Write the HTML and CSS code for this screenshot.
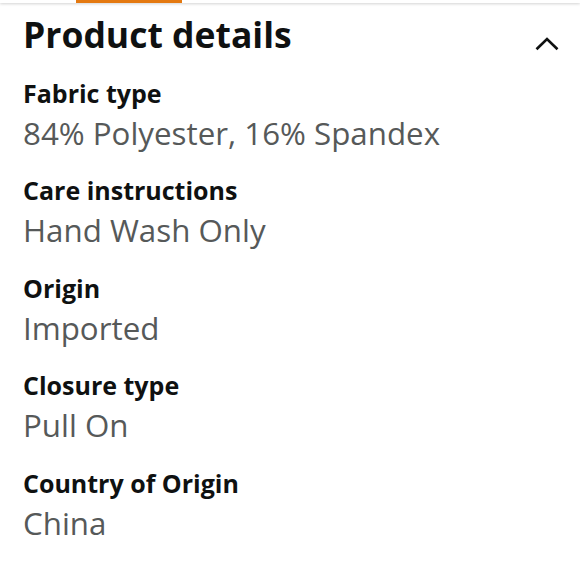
FILE: index.html
```html
<!DOCTYPE html>
<html>
<head>
<meta charset="utf-8">
<link rel="stylesheet" href="styles.css">
</head>
<body>
<div class="topbar"><div class="tab-indicator"></div></div>
<section class="details">
  <header class="details-header">
    <h2 class="title">Product details</h2>
    <svg class="chevron" width="24" height="14" viewBox="0 0 24 14"><path d="M1.5 12.3 L12 2 L22.5 12.3" fill="none" stroke="#0f1111" stroke-width="2.6"/></svg>
  </header>
  <dl class="attrs">
    <div class="attr"><dt>Fabric type</dt><dd>84% Polyester, 16% Spandex</dd></div>
    <div class="attr"><dt>Care instructions</dt><dd>Hand Wash Only</dd></div>
    <div class="attr"><dt>Origin</dt><dd>Imported</dd></div>
    <div class="attr"><dt>Closure type</dt><dd>Pull On</dd></div>
    <div class="attr"><dt>Country of Origin</dt><dd>China</dd></div>
  </dl>
</section>
</body>
</html>
```
FILE: styles.css
```css
* { box-sizing: border-box; }
html, body { margin: 0; padding: 0; background: #fff; }
body { font-family: "Open Sans", "Noto Sans", sans-serif; color: #0f1111; }
.topbar { height: 3px; background: #fff; box-shadow: 0 1px 3px rgba(0,0,0,0.18); }
.tab-indicator { margin-left: 76px; width: 106px; height: 3px; background: #e47911; }
.details { padding: 0 21px 0 23px; }
.details-header { display: flex; align-items: flex-start; justify-content: space-between; margin-top: 7px; }
.title { margin: 0; font-size: 35.5px; font-weight: 700; line-height: 49px; letter-spacing: 0; }
.chevron { margin-top: 26.5px; }
.attrs { margin: 16.5px 0 0; }
.attr { margin-bottom: 17.6px; }
.attr dt { font-size: 25px; font-weight: 700; line-height: 34px; }
.attr dd { margin: 0; font-size: 31.3px; line-height: 46px; color: #565959; }
```
